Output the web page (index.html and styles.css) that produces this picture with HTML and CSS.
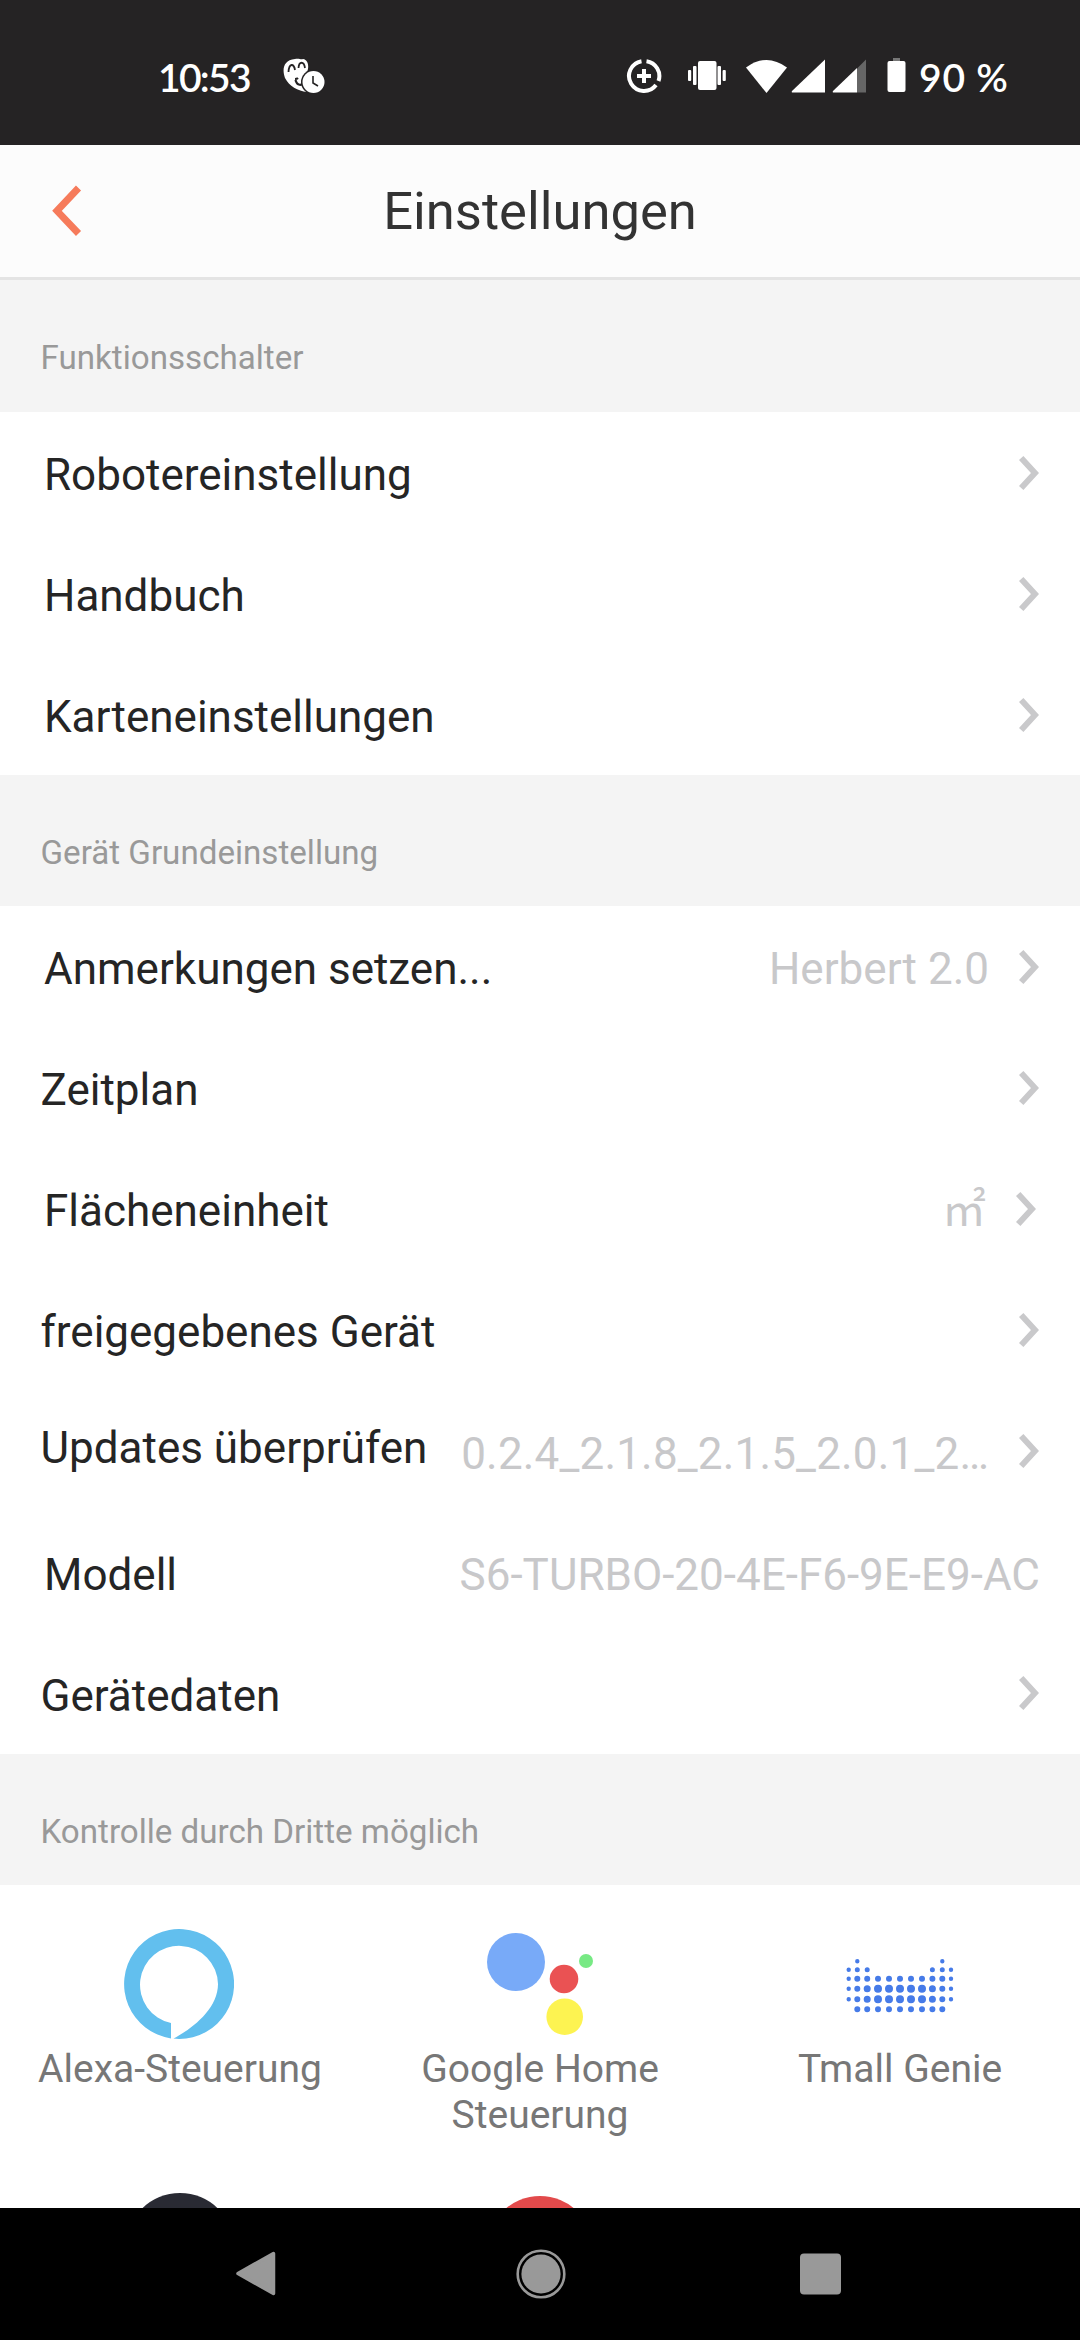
FILE: index.html
```html
<!DOCTYPE html>
<html lang="de">
<head>
<meta charset="utf-8">
<title>Einstellungen</title>
<link rel="stylesheet" href="styles.css">
</head>
<body>
<svg width="0" height="0" class="defs"><defs>
  <symbol id="chevron" viewBox="0 0 20 36"><path d="M2.200 3 16 18 2.200 33" fill="none" stroke="#c9c9cb" stroke-width="6"/></symbol>
</defs></svg>
<div class="screen">
  <div class="statusbar">
    <div class="status-left">
      <span class="clock">10:53</span>
      <svg class="face" width="42" height="36" viewBox="0 0 42 36">
        <path d="M12 1C16 0 18 2 20 1C26 2 26 10 24 14C20 18 19 25 24 34C15 33 6 28 2 20C-1 12 0 2 12 1Z" fill="#fff"/>
        <path d="M5.500 14C6 5 11 5 12 12M15.500 10C16 3 21 3 22 10" fill="none" stroke="#252324" stroke-width="1.800"/>
        <path d="M12 21q2 0 3-1M12.500 22C14 28 19 28 21 24" fill="none" stroke="#252324" stroke-width="2.200"/>
        <circle cx="30.500" cy="24" r="12.500" fill="#252324"/>
        <circle cx="30.500" cy="24" r="11" fill="#fff"/>
        <path d="M30 18v7l5 3" fill="none" stroke="#252324" stroke-width="1.600"/>
      </svg>
    </div>
    <div class="status-right">
      <svg width="382" height="36" viewBox="626 58 382 36" class="status-icons">
        <g fill="none" stroke="#fff" stroke-width="4">
          <path d="M641.500 61.200A15 15 0 1 0 656 85M646.500 61.200A15 15 0 0 1 658.500 81"/>
          <path d="M644 69v14M637 76h14"/>
        </g>
        <g fill="#fff">
          <rect x="698" y="61" width="18.500" height="29" rx="2"/>
          <rect x="693" y="66" width="3.500" height="19" rx="1"/><rect x="688" y="70" width="3.200" height="11" rx="1"/>
          <rect x="717.500" y="66" width="3.500" height="19" rx="1"/><rect x="722.600" y="70" width="3.200" height="11" rx="1"/>
          <path d="M746 67.500Q766.500 52.500 787 67.500L766.500 93Z"/>
          <path d="M825 59.500V92.500H793q-2 0-1-1.500Z"/>
          <path d="M866 59.500V92.500H857V68.500Z" fill="#666"/>
          <path d="M857 68V92.500H834q-2 0-1-1.500Z"/>
          <rect x="893" y="58" width="7" height="4" fill="#777"/>
          <rect x="887.500" y="61" width="18" height="31" rx="2"/>
        </g>
      </svg>
      <span class="battery">90&nbsp;%</span>
    </div>
  </div>

  <header class="header">
    <svg class="back" width="30" height="52" viewBox="0 0 30 52"><path d="M26.500 3 5 25.800 26.500 48.500" fill="none" stroke="#f67b5b" stroke-width="7"/></svg>
    <h1 class="title">Einstellungen</h1>
  </header>

  <main class="content">
    <h2 class="section first">Funktionsschalter</h2>
    <ul class="list short">
      <li class="row"><span class="label indent">Robotereinstellung</span><svg class="chev"><use href="#chevron"/></svg></li>
      <li class="row"><span class="label indent">Handbuch</span><svg class="chev"><use href="#chevron"/></svg></li>
      <li class="row"><span class="label indent">Karteneinstellungen</span><svg class="chev"><use href="#chevron"/></svg></li>
    </ul>
    <h2 class="section">Gerät Grundeinstellung</h2>
    <ul class="list">
      <li class="row"><span class="label indent">Anmerkungen setzen...</span><span class="value">Herbert 2.0</span><svg class="chev"><use href="#chevron"/></svg></li>
      <li class="row"><span class="label">Zeitplan</span><svg class="chev"><use href="#chevron"/></svg></li>
      <li class="row unit"><span class="label indent">Flächeneinheit</span><span class="value">㎡</span><svg class="chev"><use href="#chevron"/></svg></li>
      <li class="row"><span class="label">freigegebenes Gerät</span><svg class="chev"><use href="#chevron"/></svg></li>
      <li class="row"><span class="label raised">Updates überprüfen</span><span class="value version">0.2.4_2.1.8_2.1.5_2.0.1_2…</span><svg class="chev"><use href="#chevron"/></svg></li>
      <li class="row"><span class="label indent">Modell</span><span class="value">S6-TURBO-20-4E-F6-9E-E9-AC</span></li>
      <li class="row"><span class="label">Gerätedaten</span><svg class="chev"><use href="#chevron"/></svg></li>
    </ul>
    <h2 class="section">Kontrolle durch Dritte möglich</h2>
    <div class="grid">
      <div class="tile">
        <svg class="alexa" width="110" height="110" viewBox="0 0 110 110"><path d="M47 109.400A55 55 0 1 1 55 110L49.500 109.500C66 101 94 81 94 55A39 39 0 1 0 47 94Z" fill="#62bfee"/></svg>
        <span>Alexa-Steuerung</span>
      </div>
      <div class="tile">
        <svg width="110" height="110" viewBox="485 1930 110 110"><circle cx="516" cy="1963" r="29" fill="#78aaf8"/><circle cx="564" cy="1980" r="14.300" fill="#ea5253"/><circle cx="564.700" cy="2017.700" r="18.300" fill="#fdf351"/><circle cx="586" cy="1962" r="7" fill="#77e984"/></svg>
        <span>Google Home Steuerung</span>
      </div>
      <div class="tile">
        <svg width="110" height="110" viewBox="85 50 110 110" fill="none" stroke="#467be8" stroke-linecap="round">
          <path stroke-width="4.400" d="M97.300 82.300h0M182.300 82.300h0M88.700 90.700h0M191 90.700h0M88.700 99.700h0M191 99.700h0M88.700 109.700h0M191 109.700h0M88.700 120.300h0M191 120.300h0"/>
          <path stroke-width="5" d="M97.300 90.700h0M107.200 90.700h0M172.400 90.700h0M182.300 90.700h0"/>
          <path stroke-width="6" d="M97.300 99.700h0M107.200 99.700h0M118 99.700h0M129 99.700h0M140 99.700h0M151 99.700h0M162 99.700h0M172.400 99.700h0M182.300 99.700h0M97.300 109.700h0M182.300 109.700h0M97.300 120.300h0M182.300 120.300h0M97.300 130.200h0M107.200 130.200h0M118 130.200h0M129 130.200h0M140 130.200h0M151 130.200h0M162 130.200h0M172.400 130.200h0M182.300 130.200h0"/>
          <path stroke-width="7" d="M107.200 109.700h0M172.400 109.700h0M107.200 120.300h0M172.400 120.300h0"/>
          <path stroke-width="8" d="M118 109.700h0M129 109.700h0M140 109.700h0M151 109.700h0M162 109.700h0M118 120.300h0M129 120.300h0M140 120.300h0M151 120.300h0M162 120.300h0"/>
        </svg>
        <span>Tmall Genie</span>
      </div>
      <div class="tile"><svg width="110" height="110" viewBox="0 0 110 110"><circle cx="55" cy="54" r="54" fill="#292a33"/></svg></div>
      <div class="tile"><svg width="110" height="110" viewBox="0 0 110 110"><circle cx="55" cy="56" r="53" fill="#e24a4b"/></svg></div>
    </div>
  </main>

  <nav class="navbar">
    <svg width="54" height="50" viewBox="232 2250 54 50"><path d="M238 2274.500 273.500 2254.500V2294.500Z" fill="#999" stroke="#999" stroke-width="3.500" stroke-linejoin="round"/></svg>
    <svg width="50" height="50" viewBox="0 0 50 50"><circle cx="25" cy="25" r="23.300" fill="none" stroke="#999" stroke-width="2.600"/><circle cx="25" cy="25" r="19.600" fill="#999"/></svg>
    <svg width="50" height="50" viewBox="0 0 50 50"><rect x="5" y="4.500" width="41" height="41" rx="4" fill="#999"/></svg>
  </nav>
</div>
</body>
</html>
```
FILE: styles.css
```css
* { box-sizing: border-box; }
body, h1, h2, ul { margin: 0; padding: 0; }
body { background: #fff; font-family: Roboto, "Noto Sans", sans-serif; }
.defs { display: block; width: 0; height: 0; }
.screen {
  display: flex;
  flex-direction: column;
  width: 1080px;
  height: 2340px;
  overflow: hidden;
}
svg { display: block; flex: none; }

.statusbar {
  display: flex;
  justify-content: space-between;
  flex: none;
  height: 145px;
  padding: 58px 72px 0 158px;
  background: #252324;
  color: #fff;
  font-family: Lato, Roboto, sans-serif;
  font-weight: 600;
  font-size: 39px;
  line-height: 39px;
}
.status-left, .status-right { display: flex; }
.clock { width: 125px; white-space: nowrap; letter-spacing: -1.700px; }
.status-right { width: 382px; }
.status-icons { width: 382px; margin-right: -89px; }
.battery { white-space: nowrap; letter-spacing: 0.800px; }

.header {
  display: grid;
  grid-template-columns: 52px 1fr 52px;
  align-items: center;
  flex: none;
  height: 135px;
  padding: 0 0 1px;
  background: #fcfcfc;
  border-bottom: 3px solid #e4e4e4;
}
.back { justify-self: end; transform: translateX(30px); }
.title {
  font-weight: 400;
  font-size: 52.500px;
  line-height: 60px;
  color: #333;
  text-align: center;
}

.content { flex: 1; min-height: 0; overflow: hidden; }
.section {
  height: 131px;
  padding: 58px 39px 0 40.500px;
  background: #f4f4f4;
  font-weight: 400;
  font-size: 33.150px;
  line-height: 40px;
  color: #999;
}
.section.first { height: 132px; }
.list {
  display: grid;
  grid-auto-rows: 1fr;
  height: 848px;
  list-style: none;
}
.list.short { height: 363px; }
.row {
  display: flex;
  align-items: center;
  padding: 5px 40px 0 40.500px;
}
.label { font-size: 44px; line-height: 52px; color: #252525; white-space: nowrap; }
.label.indent { padding-left: 3.500px; }
.label.raised { padding-bottom: 12px; }
.value {
  margin-left: auto;
  font-size: 44px;
  line-height: 52px;
  color: #c8c8ca;
  white-space: nowrap;
}
.version { letter-spacing: 0.180px; }
.chev { width: 20px; height: 36px; margin: 0 1px 5px auto; }
.value + .chev { margin-left: 30px; }
.unit { padding-right: 43px; }
.unit .value { font-family: Roboto, "Noto Sans CJK SC", sans-serif; }

.grid {
  display: grid;
  grid-template-columns: repeat(3, 360px);
  grid-template-rows: 264px 264px;
  padding-top: 44px;
}
.tile {
  display: flex;
  flex-direction: column;
  align-items: center;
  gap: 7px;
  font-size: 39px;
  line-height: 46px;
  color: #777;
  text-align: center;
}
.tile span { width: 300px; }
.alexa { margin-right: 2px; }

.navbar {
  display: flex;
  justify-content: space-between;
  flex: none;
  height: 132px;
  padding: 41px 235px 0 232px;
  background: #000;
}
```
